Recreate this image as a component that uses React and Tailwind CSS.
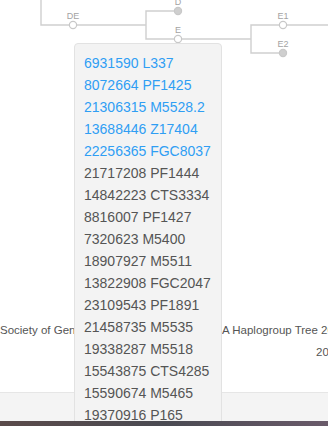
const BLUE_ROWS = [
  '6931590 L337',
  '8072664 PF1425',
  '21306315 M5528.2',
  '13688446 Z17404',
  '22256365 FGC8037',
]

const GRAY_ROWS = [
  '21717208 PF1444',
  '14842223 CTS3334',
  '8816007 PF1427',
  '7320623 M5400',
  '18907927 M5511',
  '13822908 FGC2047',
  '23109543 PF1891',
  '21458735 M5535',
  '19338287 M5518',
  '15543875 CTS4285',
  '15590674 M5465',
  '19370916 P165',
  '17116476 Z17391',
]

function Node({ x, y, label, filled }) {
  return (
    <g>
      <text x={x} y={y - 6} textAnchor="middle" fontSize="9" fill="#a3a3a3" fontFamily="Liberation Sans, Arial, sans-serif">
        {label}
      </text>
      <circle cx={x} cy={y} r="3.6" fill={filled ? '#cfcfcf' : '#fff'} stroke="#c8c8c8" strokeWidth="1.2" />
    </g>
  )
}

function Tree() {
  return (
    <svg width="328" height="60" viewBox="0 0 328 60" className="block shrink-0">
      <g stroke="#cfcfcf" strokeWidth="1.4" fill="none">
        <path d="M41 0 V25 H146" />
        <path d="M178 11 H146 V39 H251" />
        <path d="M283 25 H251 V53 H283" />
        <path d="M283 25 H328" />
      </g>
      <Node x={178} y={11} label="D" filled />
      <Node x={73} y={25} label="DE" />
      <Node x={178} y={39} label="E" />
      <Node x={283} y={25} label="E1" />
      <Node x={283} y={53} label="E2" filled />
    </svg>
  )
}

export default function App() {
  return (
    <div className="w-[328px] h-[426px] overflow-hidden bg-white font-['Liberation_Sans',Arial,sans-serif]">
      <div className="relative h-[421px] overflow-hidden flex flex-col">
        <Tree />

        <div className="mt-[261px] flex whitespace-nowrap text-[11.5px] leading-[18px] text-[#555]">
          <span className="w-[222px] shrink-0 overflow-hidden">Society of Genetic Genealogy. Y-DN</span>
          <span className="shrink-0">A Haplogroup Tree 2019</span>
        </div>
        <div className="mt-[4px] pl-[316px] whitespace-nowrap text-[11.5px] leading-[18px] text-[#555]">2019</div>

        <div className="mt-auto h-[29px] shrink-0 bg-[#f4f4f4] border-t border-[#e6e6e6]" />

        <div className="absolute left-[74px] top-[43px] w-[148px] h-[420px] rounded-[4px] border border-[#e2e2e2] bg-[#f3f3f3] pt-[8px] pl-[9px] text-[14px] leading-[22px] whitespace-nowrap">
          {BLUE_ROWS.map((r) => (
            <div key={r} className="text-[#2f9ef3]">{r}</div>
          ))}
          {GRAY_ROWS.map((r) => (
            <div key={r} className="text-[#555]">{r}</div>
          ))}
        </div>
      </div>
      <div className="h-[5px] bg-gradient-to-r from-[#5a4a4a] via-[#4a4a52] to-[#6a5a6a]" />
    </div>
  )
}
